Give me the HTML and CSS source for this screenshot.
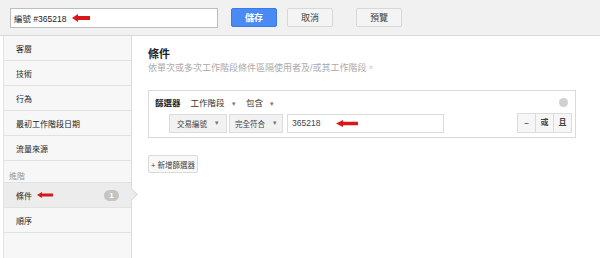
FILE: index.html
```html
<!DOCTYPE html>
<html>
<head>
    <meta charset="UTF-8">
    <title>區隔編輯器</title>
    <link rel="stylesheet" href="styles.css">
</head>
<body>
    <div class="topbar">
        <div class="name-box">
            <span>編號 #365218</span>
            <svg class="arrow" width="18" height="8" viewBox="0 0 18 8"><path d="M0 4 L6 0 L6 2 L18 2 L18 6 L6 6 L6 8 Z" fill="#d81818"/></svg>
        </div>
        <button class="btn btn-save">儲存</button>
        <button class="btn btn-cancel">取消</button>
        <button class="btn btn-preview">預覽</button>
    </div>

    <div class="layout">
        <div class="sidebar">
            <div class="nav-item">客層</div>
            <div class="nav-item">技術</div>
            <div class="nav-item">行為</div>
            <div class="nav-item">最初工作階段日期</div>
            <div class="nav-item">流量來源</div>
            <div class="nav-label">進階</div>
            <div class="nav-item active">
                <span>條件</span>
                <svg class="arrow" width="16" height="6" viewBox="0 0 16 6"><path d="M0 3 L5 0 L5 1.5 L16 1.5 L16 4.5 L5 4.5 L5 6 Z" fill="#d81818"/></svg>
                <span class="badge">1</span>
                <span class="pointer"></span>
            </div>
            <div class="nav-item">順序</div>
        </div>

        <div class="main">
            <h2>條件</h2>
            <div class="desc">依單次或多次工作階段條件區隔使用者及/或其工作階段。</div>

            <div class="filter">
                <div class="filter-head">
                    <b>篩選器</b>
                    <span class="pick">工作階段 <i>▾</i></span>
                    <span class="pick">包含 <i>▾</i></span>
                    <span class="close"></span>
                </div>
                <div class="filter-row">
                    <span class="select">交易編號 <i>▾</i></span>
                    <span class="select narrow">完全符合 <i>▾</i></span>
                    <div class="value">
                        <span>365218</span>
                        <svg class="arrow" width="22" height="7" viewBox="0 0 22 7"><path d="M0 3.5 L7 0 L7 1.7 L22 1.7 L22 5.3 L7 5.3 L7 7 Z" fill="#d81818"/></svg>
                    </div>
                    <div class="ops">
                        <span class="op">–</span>
                        <span class="op">或</span>
                        <span class="op">且</span>
                    </div>
                </div>
            </div>

            <button class="add-btn">+ 新增篩選器</button>
        </div>
    </div>
</body>
</html>
```

FILE: styles.css
```css
body {
    margin: 0;
    font-family: Arial, "Liberation Sans", "Noto Sans CJK TC", sans-serif;
    font-size: 9px;
    color: #333;
    background: #fff;
}

.topbar {
    display: flex;
    align-items: center;
    height: 36px;
    padding: 0 10px;
    background: #f1f1f1;
    border-bottom: 1px solid #d8d8d8;
    box-sizing: border-box;
}

.name-box {
    display: flex;
    align-items: center;
    gap: 6px;
    width: 208px;
    height: 20px;
    padding: 0 3px;
    box-sizing: border-box;
    background: #fff;
    border: 1px solid #bdbdbd;
    font-size: 8.5px;
    color: #222;
}

.btn {
    height: 19px;
    padding: 0;
    font-family: inherit;
    font-size: 9px;
    border-radius: 2px;
    cursor: pointer;
}

.btn-save {
    width: 46px;
    margin-left: 13px;
    background: #4a8af4;
    border: 1px solid #3b7be8;
    color: #fff;
    font-weight: bold;
}

.btn-cancel, .btn-preview {
    width: 46px;
    background: #f4f4f4;
    border: 1px solid #d8d8d8;
    color: #444;
}

.btn-cancel { margin-left: 10px; }
.btn-preview { margin-left: 23px; }

.layout {
    display: flex;
    height: 222px;
}

.sidebar {
    width: 127px;
    margin-left: 3px;
    background: #f7f7f7;
    border-left: 1px solid #e4e4e4;
    border-right: 1px solid #dcdcdc;
}

.nav-item {
    position: relative;
    display: flex;
    align-items: center;
    gap: 5px;
    height: 24px;
    padding-left: 12px;
    border-bottom: 1px solid #e2e2e2;
    font-size: 8px;
    color: #222;
}

.nav-label {
    height: 22px;
    box-sizing: border-box;
    padding: 11px 0 0 5px;
    line-height: 10px;
    font-size: 8px;
    color: #999;
    border-bottom: 1px solid #e2e2e2;
}

.nav-item.active {
    background: #ececec;
}

.badge {
    margin-left: auto;
    margin-right: 12px;
    width: 15px;
    height: 11px;
    line-height: 11px;
    border-radius: 6px;
    background: #c4c4c4;
    color: #fff;
    text-align: center;
    font-size: 8px;
    font-weight: bold;
}

.pointer {
    position: absolute;
    right: -5px;
    top: 7px;
    width: 8px;
    height: 8px;
    background: #ececec;
    border-top: 1px solid #dcdcdc;
    border-right: 1px solid #dcdcdc;
    transform: rotate(45deg);
}

.main {
    flex: 1;
    padding: 10px 0 0 16px;
}

.main h2 {
    margin: 0;
    height: 16px;
    line-height: 16px;
    font-size: 11px;
    font-weight: bold;
    color: #222;
}

.desc {
    height: 12px;
    line-height: 12px;
    font-size: 9px;
    color: #aaa;
}

.filter {
    width: 428px;
    height: 48px;
    margin-top: 16px;
    border: 1px solid #dadada;
    box-sizing: border-box;
}

.filter-head {
    display: flex;
    align-items: center;
    gap: 10px;
    height: 22px;
    padding-left: 6px;
    font-size: 8.5px;
    color: #333;
}

.filter-head b {
    color: #222;
}

.pick i, .select i {
    font-style: normal;
    font-size: 7px;
    color: #777;
    margin-left: 5px;
}

.close {
    margin-left: auto;
    margin-right: 7px;
    width: 9px;
    height: 9px;
    border-radius: 50%;
    background: #d0d0d0;
}

.filter-row {
    display: flex;
    align-items: center;
    padding-left: 20px;
}

.select {
    display: flex;
    align-items: center;
    justify-content: center;
    width: 58px;
    height: 19px;
    margin-right: 2px;
    background: #f2f2f2;
    border: 1px solid #dcdcdc;
    box-sizing: border-box;
    font-size: 7.5px;
    color: #444;
}

.select.narrow { width: 54px; }

.select i { margin-left: 8px; }

.value {
    display: flex;
    align-items: center;
    gap: 16px;
    width: 157px;
    height: 19px;
    margin-left: 2px;
    padding-left: 4px;
    border: 1px solid #dcdcdc;
    box-sizing: border-box;
    font-size: 8.5px;
    color: #444;
}

.ops {
    display: flex;
    margin-left: auto;
    margin-right: 3px;
}

.op {
    width: 17px;
    height: 18px;
    line-height: 18px;
    text-align: center;
    background: #f6f6f6;
    border: 1px solid #dcdcdc;
    margin-left: -1px;
    font-size: 8px;
    font-weight: bold;
    color: #444;
}

.add-btn {
    display: block;
    margin-top: 17px;
    height: 18px;
    padding: 0 2px;
    background: #f8f8f8;
    border: 1px solid #dadada;
    border-radius: 2px;
    font-family: inherit;
    font-size: 7.5px;
    color: #444;
}
```
